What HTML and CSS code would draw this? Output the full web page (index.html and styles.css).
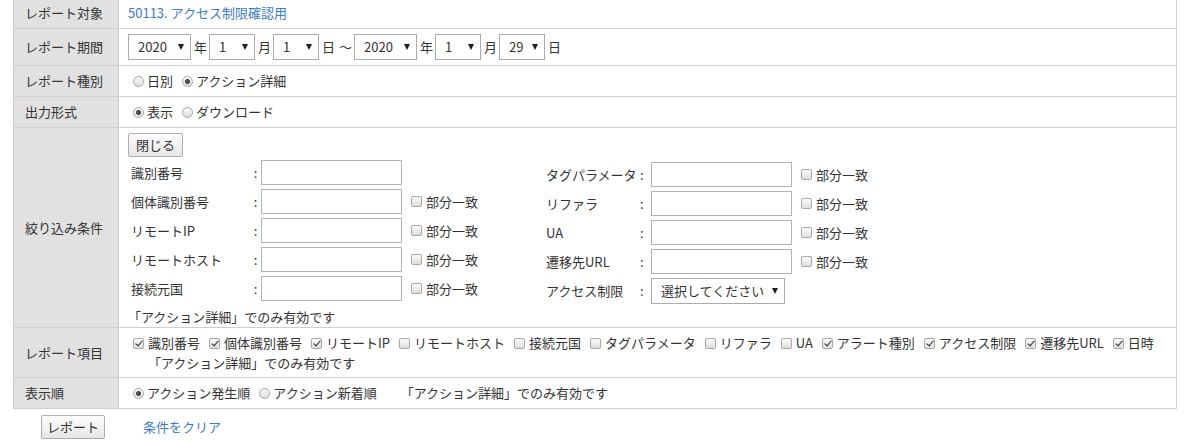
FILE: index.html
```html
<!DOCTYPE html>
<html lang="ja">
<head>
<meta charset="utf-8">
<title>レポート</title>
<link rel="stylesheet" href="styles.css">
</head>
<body>
<div class="page">
  <table class="form">
    <tr>
      <th>レポート対象</th>
      <td><a class="link" href="#">50113. アクセス制限確認用</a></td>
    </tr>
    <tr>
      <th>レポート期間</th>
      <td>
        <div class="dates">
          <span class="sel w-year"><select><option>2020</option></select></span><span class="unit">年</span>
          <span class="sel w-num"><select><option>1</option></select></span><span class="unit">月</span>
          <span class="sel w-num"><select><option>1</option></select></span><span class="unit tight">日</span><span class="tilde">〜</span>
          <span class="sel w-year"><select><option>2020</option></select></span><span class="unit">年</span>
          <span class="sel w-num"><select><option>1</option></select></span><span class="unit">月</span>
          <span class="sel w-num"><select><option>29</option></select></span><span class="unit">日</span>
        </div>
      </td>
    </tr>
    <tr>
      <th>レポート種別</th>
      <td>
        <div class="opts">
          <label class="opt"><input class="rb" type="radio" name="kind">日別</label>
          <label class="opt"><input class="rb" type="radio" name="kind" checked>アクション詳細</label>
        </div>
      </td>
    </tr>
    <tr>
      <th>出力形式</th>
      <td>
        <div class="opts">
          <label class="opt"><input class="rb" type="radio" name="out" checked>表示</label>
          <label class="opt"><input class="rb" type="radio" name="out">ダウンロード</label>
        </div>
      </td>
    </tr>
    <tr>
      <th>絞り込み条件</th>
      <td class="filter">
        <button class="btn btn-close" type="button">閉じる</button>
        <div class="fgrid">
          <div class="fcol left">
            <div class="frow"><span class="flabel">識別番号</span><span class="colon">:</span><input class="text" type="text"></div>
            <div class="frow"><span class="flabel">個体識別番号</span><span class="colon">:</span><input class="text" type="text"><label class="chk"><input class="cb" type="checkbox">部分一致</label></div>
            <div class="frow"><span class="flabel">リモートIP</span><span class="colon">:</span><input class="text" type="text"><label class="chk"><input class="cb" type="checkbox">部分一致</label></div>
            <div class="frow"><span class="flabel">リモートホスト</span><span class="colon">:</span><input class="text" type="text"><label class="chk"><input class="cb" type="checkbox">部分一致</label></div>
            <div class="frow"><span class="flabel">接続元国</span><span class="colon">:</span><input class="text" type="text"><label class="chk"><input class="cb" type="checkbox">部分一致</label></div>
          </div>
          <div class="fcol right">
            <div class="frow"><span class="flabel">タグパラメータ</span><span class="colon">:</span><input class="text" type="text"><label class="chk"><input class="cb" type="checkbox">部分一致</label></div>
            <div class="frow"><span class="flabel">リファラ</span><span class="colon">:</span><input class="text" type="text"><label class="chk"><input class="cb" type="checkbox">部分一致</label></div>
            <div class="frow"><span class="flabel">UA</span><span class="colon">:</span><input class="text" type="text"><label class="chk"><input class="cb" type="checkbox">部分一致</label></div>
            <div class="frow"><span class="flabel">遷移先URL</span><span class="colon">:</span><input class="text" type="text"><label class="chk"><input class="cb" type="checkbox">部分一致</label></div>
            <div class="frow"><span class="flabel">アクセス制限</span><span class="colon">:</span><span class="sel w-wide"><select><option>選択してください</option></select></span></div>
          </div>
        </div>
        <p class="note below">「アクション詳細」でのみ有効です</p>
      </td>
    </tr>
    <tr>
      <th>レポート項目</th>
      <td class="items-cell">
        <div class="opts items">
          <label class="opt"><input class="cb" type="checkbox" checked>識別番号</label>
          <label class="opt"><input class="cb" type="checkbox" checked>個体識別番号</label>
          <label class="opt"><input class="cb" type="checkbox" checked>リモートIP</label>
          <label class="opt"><input class="cb" type="checkbox">リモートホスト</label>
          <label class="opt"><input class="cb" type="checkbox">接続元国</label>
          <label class="opt"><input class="cb" type="checkbox">タグパラメータ</label>
          <label class="opt"><input class="cb" type="checkbox">リファラ</label>
          <label class="opt"><input class="cb" type="checkbox">UA</label>
          <label class="opt"><input class="cb" type="checkbox" checked>アラート種別</label>
          <label class="opt"><input class="cb" type="checkbox" checked>アクセス制限</label>
          <label class="opt"><input class="cb" type="checkbox" checked>遷移先URL</label>
          <label class="opt"><input class="cb" type="checkbox" checked>日時</label>
        </div>
        <p class="note indent">「アクション詳細」でのみ有効です</p>
      </td>
    </tr>
    <tr>
      <th>表示順</th>
      <td>
        <div class="opts">
          <label class="opt"><input class="rb" type="radio" name="order" checked>アクション発生順</label>
          <label class="opt"><input class="rb" type="radio" name="order">アクション新着順</label>
          <span class="note side">「アクション詳細」でのみ有効です</span>
        </div>
      </td>
    </tr>
  </table>
  <div class="actions">
    <button class="btn btn-report" type="button">レポート</button>
    <a class="link clear" href="#">条件をクリア</a>
  </div>
</div>
</body>
</html>
```
FILE: styles.css
```css
* { box-sizing: border-box; }

body {
  margin: 0;
  font-family: "Noto Sans CJK JP", "Noto Sans", sans-serif;
  font-size: 13px;
  line-height: 20px;
  color: #333;
  background: #fff;
}

.page { padding: 0 13px; }

.form {
  width: 1164px;
  border-collapse: collapse;
}

.form th,
.form td {
  border: 1px solid #cfcfcf;
}

.form th {
  width: 105px;
  background: #e1e1e1;
  font-weight: normal;
  text-align: left;
  vertical-align: middle;
  padding: 5px 0 5px 11px;
  white-space: nowrap;
}

.form td {
  padding: 5px 10px 5px 9px;
  vertical-align: middle;
}

.form tr:first-child > th,
.form tr:first-child > td {
  border-top: 0;
  padding-top: 3px;
}

.link {
  color: #3a7cc0;
  text-decoration: none;
}

/* selects */
.sel {
  position: relative;
  display: inline-block;
  flex: none;
}
.sel select {
  -webkit-appearance: none;
  appearance: none;
  display: block;
  height: 26px;
  border: 1px solid #ababab;
  border-radius: 0;
  background: #fff;
  font: inherit;
  color: #333;
  padding: 0 0 0 9px;
  margin: 0;
}
.sel::after {
  content: "";
  position: absolute;
  right: 7px;
  top: 10px;
  border-left: 3px solid transparent;
  border-right: 3px solid transparent;
  border-top: 6px solid #1e1e1e;
  pointer-events: none;
}
.w-year select { width: 63px; }
.w-num select { width: 46px; }
.w-wide select { width: 134px; }

.dates {
  display: flex;
  align-items: center;
}
.unit { margin: 0 2px 0 3px; }
.unit.tight { margin-right: 0; }
.tilde { margin: 0 2px 0 4px; }

/* radios & checkboxes */
.opts {
  display: flex;
  align-items: center;
  white-space: nowrap;
}
.opt {
  display: inline-flex;
  align-items: center;
  margin-right: 4px;
}
.rb,
.cb {
  -webkit-appearance: none;
  appearance: none;
  position: relative;
  flex: none;
  width: 11px;
  height: 11px;
  margin: 0 4px 0 5px;
  border: 1px solid #a9a9a9;
  background: linear-gradient(#fbfbfb, #dedede);
}
.rb { border-radius: 50%; margin-right: 3px; }
.rb:checked {
  background: radial-gradient(circle, #4d4d4d 0 2.2px, transparent 2.8px),
              linear-gradient(#fbfbfb, #dedede);
}
.cb { border-radius: 2px; }
.cb:checked::after {
  content: "";
  position: absolute;
  left: 3px;
  top: 0;
  width: 3px;
  height: 6px;
  border: solid #2a2a2a;
  border-width: 0 1.6px 1.6px 0;
  transform: rotate(40deg);
}

/* buttons */
.btn {
  height: 24px;
  padding: 0;
  border: 1px solid #adadad;
  border-radius: 2px;
  background: linear-gradient(#fdfdfd, #e6e6e6);
  font: inherit;
  color: #333;
  line-height: 22px;
  text-align: center;
}
.btn-close { width: 55px; display: block; }
.btn-report { width: 64px; }

/* filter block */
.form td.filter { padding-bottom: 0; }
.fgrid {
  display: flex;
  align-items: flex-start;
  margin-top: 1px;
}
.fcol.left { width: 415px; flex: none; }
.fcol.right { margin-top: 2px; }
.frow {
  display: flex;
  align-items: center;
  height: 29px;
  white-space: nowrap;
}
.flabel { padding-left: 3px; flex: none; }
.left .flabel { width: 122px; }
.right .flabel { width: 95px; }
.colon { width: 11px; text-align: center; flex: none; }
.right .colon { width: 13px; text-align: left; padding-left: 2px; }
.text {
  width: 141px;
  height: 25px;
  border: 1px solid #b3b3b3;
  padding: 0 4px;
  font: inherit;
  margin: 0;
  flex: none;
}
.chk {
  display: inline-flex;
  align-items: center;
  margin-left: 4px;
}

.note {
  margin: 0;
  line-height: 20px;
}
.note.below { padding-top: 2px; }
.note.indent { margin-left: 20px; }
.note.side { margin-left: 20px; }
.form td.items-cell { padding-bottom: 4px; }

/* bottom actions */
.actions {
  display: flex;
  align-items: center;
  padding: 6px 0 0 28px;
}
.clear { margin-left: 38px; }
```
